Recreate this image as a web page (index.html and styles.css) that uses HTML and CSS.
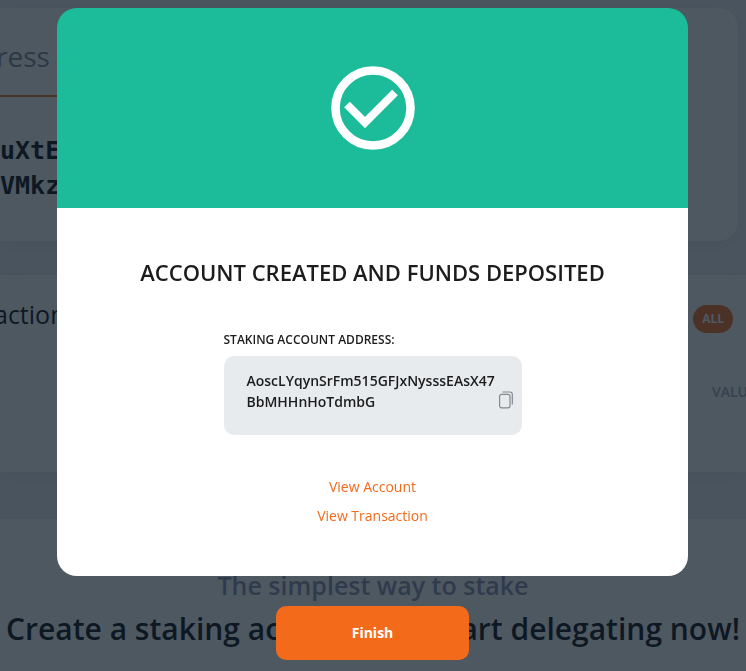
FILE: index.html
```html
<!DOCTYPE html>
<html lang="en">
<head>
<meta charset="utf-8">
<meta name="viewport" content="width=device-width, initial-scale=1">
<title>Account created</title>
<link rel="stylesheet" href="styles.css">
</head>
<body>
<div class="page" aria-hidden="true">
  <section class="card address-card">
    <h2 class="tab">ress</h2>
    <p class="key">uXtE<br>VMkz</p>
  </section>
  <section class="card transactions">
    <header class="bar">
      <h2 class="bar-title">action</h2>
      <span class="pill">ALL</span>
    </header>
    <p class="column">VALU</p>
  </section>
  <section class="card promo">
    <p class="promo-lead">The simplest way to stake</p>
    <h2 class="promo-title">Create a staking account and start delegating now!</h2>
  </section>
</div>

<div class="overlay">
  <div class="dialog" role="dialog" aria-modal="true" aria-labelledby="title">
    <div class="banner">
      <svg class="check" viewBox="0 0 84 84" aria-hidden="true">
        <circle cx="42" cy="42" r="37.5" fill="none" stroke="#fff" stroke-width="8.6"/>
        <path d="M16 38.5 34 56.5 64 26.5" fill="none" stroke="#fff" stroke-width="8"/>
      </svg>
    </div>
    <div class="content">
      <h1 class="title" id="title">ACCOUNT CREATED AND FUNDS DEPOSITED</h1>
      <div class="field">
        <div class="label">STAKING ACCOUNT ADDRESS:</div>
        <div class="address">
          <span class="address-text">AoscLYqynSrFm515GFJxNysssEAsX47BbMHHnHoTdmbG</span>
          <button class="copy" type="button" aria-label="Copy address">
            <svg viewBox="0 0 14 18" aria-hidden="true" fill="none" stroke="#85898c">
              <rect x="0.6" y="3.4" width="10.4" height="13.4" rx="2" stroke-width="1.2"/>
              <path d="M3.5 1H11q2.3 0 2.3 2.3V13.5" stroke-width="1.2"/>
            </svg>
          </button>
        </div>
      </div>
      <nav class="links">
        <a href="#account">View Account</a>
        <a href="#transaction">View Transaction</a>
      </nav>
    </div>
  </div>
  <button class="finish" type="button">Finish</button>
</div>
</body>
</html>
```
FILE: styles.css
```css
* {
  box-sizing: border-box;
}

body {
  margin: 0;
  overflow: hidden;
  background: #f0f0f5;
  color: #06080f;
  font-family: "Open Sans", sans-serif;
}

h1,
h2,
p {
  margin: 0;
  font-weight: 400;
}

.page {
  height: 100vh;
  overflow: hidden;
  display: flex;
  flex-direction: column;
  padding-top: 8px;
}

.card {
  flex: none;
  background: #fff;
  box-shadow: 0 4px 20px rgba(0, 0, 40, 0.06);
}

.address-card {
  margin-right: 8px;
  padding-bottom: 38px;
  border-radius: 0 20px 20px 0;
}

.tab {
  width: 240px;
  height: 89px;
  margin-left: -4px;
  padding-top: 28px;
  border-bottom: 2px solid #f36a1b;
  color: #7d8693;
  font-size: 28px;
  line-height: 41px;
}

.key {
  padding-top: 36px;
  font: 700 25px/35px "DejaVu Sans Mono", monospace;
}

.transactions {
  height: 197px;
  margin-top: 34px;
}

.bar {
  display: flex;
  justify-content: space-between;
  align-items: flex-start;
  padding: 22px 13px 0 0;
}

.bar-title {
  margin-left: -6px;
  font-size: 25px;
  line-height: 34px;
}

.pill {
  margin-top: 8px;
  padding: 0 9px;
  border-radius: 14px;
  background: #f36a1b;
  color: #fff;
  font-size: 12px;
  font-weight: 700;
  line-height: 28px;
}

.column {
  width: 34px;
  margin: 49px 0 0 auto;
  overflow: hidden;
  color: #a0a6b0;
  font-size: 14px;
  font-weight: 600;
  line-height: 20px;
}

.promo {
  flex: 1;
  margin-top: 47px;
  padding-top: 48px;
  text-align: center;
  white-space: nowrap;
}

.promo-lead {
  color: #8c8cb0;
  font-size: 25px;
  font-weight: 600;
  line-height: 36px;
}

.promo-title {
  font-size: 30px;
  font-weight: 600;
  line-height: 52px;
}

.overlay {
  position: fixed;
  inset: 0;
  display: flex;
  flex-direction: column;
  align-items: center;
  padding: 8px 58px 0 57px;
  background: rgba(16, 30, 42, 0.74);
}

.dialog {
  width: 100%;
  overflow: hidden;
  border-radius: 20px;
  color: #1c1c1c;
}

.banner {
  display: flex;
  justify-content: center;
  align-items: center;
  height: 200px;
  background: #1cbc9b;
}

.check {
  width: 84px;
  height: 84px;
}

.content {
  display: flex;
  flex-direction: column;
  align-items: center;
  padding: 48px 24px 50px;
  background: #fff;
}

.title {
  font-size: 22px;
  font-weight: 600;
  line-height: 32px;
}

.field {
  width: 298px;
  margin-top: 43px;
}

.label {
  font-size: 12px;
  font-weight: 600;
  line-height: 18px;
}

.address {
  display: flex;
  align-items: center;
  justify-content: space-between;
  margin-top: 7px;
  padding: 14px 9px 23px 23px;
  border-radius: 10px;
  background: #e8ebee;
}

.address-text {
  width: 250px;
  font-size: 14px;
  font-weight: 600;
  line-height: 21px;
  word-break: break-all;
}

.copy {
  width: 14px;
  height: 18px;
  margin-top: 18px;
  padding: 0;
  border: 0;
  background: none;
}

.copy svg {
  display: block;
  width: 14px;
  height: 18px;
}

.links {
  display: flex;
  flex-direction: column;
  align-items: center;
  gap: 8px;
  margin-top: 41px;
}

.links a {
  color: #f36a1b;
  font-size: 14px;
  line-height: 21px;
  text-decoration: none;
}

.finish {
  width: 193px;
  height: 54px;
  margin-top: 30px;
  border: 0;
  border-radius: 10px;
  background: #f36a1b;
  color: #fff;
  font: 700 14px/20px "Open Sans", sans-serif;
}
```
